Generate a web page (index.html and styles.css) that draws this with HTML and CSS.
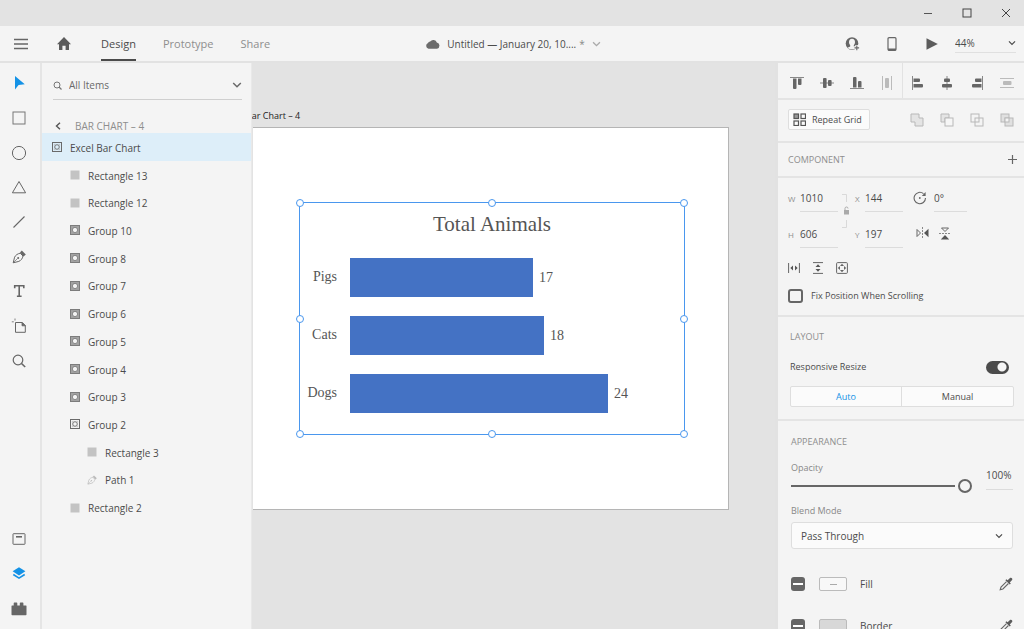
FILE: index.html
```html
<!DOCTYPE html>
<html lang="en">
<head>
<meta charset="utf-8">
<meta name="viewport" content="width=device-width, initial-scale=1">
<title>Untitled — January 20</title>
<link rel="stylesheet" href="styles.css">
</head>
<body>
<svg class="defs" aria-hidden="true">
  <symbol id="i-rect" viewBox="0 0 10 10"><rect x="0.5" y="0.5" width="9" height="9" fill="#c3c3c3"/></symbol>
  <symbol id="i-group" viewBox="0 0 10 10"><rect x="0.5" y="0.5" width="9" height="9" fill="none" stroke="#6a6a6a"/><circle cx="5" cy="5" r="2.3" fill="none" stroke="#666" stroke-width="0.9"/><path d="M2.3 3.500V2.300H3.500M6.500 2.300h1.200V3.500M7.700 6.500v1.200H6.500M3.500 7.700H2.300V6.500" fill="none" stroke="#aaa" stroke-width="0.6"/></symbol>
  <symbol id="i-group-dark" viewBox="0 0 10 10"><rect x="0.5" y="0.5" width="9" height="9" fill="#a2a2a2" stroke="#7c7c7c"/><circle cx="5" cy="5" r="2.6" fill="#f4f4f4" stroke="#6a6a6a" stroke-width="0.7"/></symbol>
  <symbol id="i-pen" viewBox="0 0 14 14"><path d="M1.200 12.800 2.600 7.200C3.700 4.900 5.600 3.800 8.200 3.200L11 6c-.6 2.600-1.800 4.400-4.200 5.400z" fill="none" stroke="currentColor"/><path d="M1.400 12.600l4-4" stroke="currentColor" stroke-width=".7"/><circle cx="6.200" cy="7.900" r="1" fill="currentColor"/><path d="M8 2.600 9.800.6l4 4-2.200 1.800z" fill="currentColor"/></symbol>
  <symbol id="i-chev" viewBox="0 0 10 6"><path d="M1.2 1 5 4.8 8.8 1" fill="none" stroke="currentColor" stroke-width="1.5"/></symbol>
  <symbol id="i-dropper" viewBox="0 0 14 14"><path d="M7.5 4.6 2 10.1 1.2 12.8l2.7-.8 5.5-5.5" fill="none" stroke="#666" stroke-width="1.1"/><path d="m6.4 3.2 1-1 1.2 1L11 .9c1.4-.9 3 .7 2.1 2.1l-2.3 2.4 1 1.2-1 1z" fill="#5c5c5c"/></symbol>
</svg>

<header class="titlebar">
  <button class="icon-btn" aria-label="Minimize"><svg width="10" height="10"><path d="M1 5.5h8" stroke="#555"/></svg></button>
  <button class="icon-btn" aria-label="Maximize"><svg width="10" height="10"><rect x="1" y="1" width="8" height="8" fill="none" stroke="#444"/></svg></button>
  <button class="icon-btn" aria-label="Close"><svg width="10" height="10"><path d="m1 1 8 8M9 1 1 9" stroke="#444"/></svg></button>
</header>

<div class="topbar">
  <div class="topbar-left">
    <button class="icon-btn menu" aria-label="Menu"><svg width="14" height="12"><path d="M0 1.500h14M0 6h14M0 10.500h14" stroke="#666" stroke-width="1.4"/></svg></button>
    <button class="icon-btn home" aria-label="Home"><svg width="14" height="13"><path d="M7 0 14 7.200h-2V13H8.600V8.800H5.400V13H2V7.200H0z" fill="#5c5c5c"/></svg></button>
    <nav class="modes">
      <a class="mode active" href="#design">Design</a>
      <a class="mode" href="#prototype">Prototype</a>
      <a class="mode" href="#share">Share</a>
    </nav>
  </div>
  <button class="document">
    <svg width="15" height="10"><path d="M3.500 9.700A3 3 0 0 1 3 4 2.300 2.300 0 0 1 5.200 2.500 3.700 3.700 0 0 1 11.800 3.600 3.100 3.100 0 0 1 12 9.700z" fill="#6c6c6c"/></svg>
    <span>Untitled — January 20, 10....</span><span class="dirty">*</span>
    <svg class="faint" width="9" height="6"><use href="#i-chev"/></svg>
  </button>
  <div class="topbar-right">
    <button class="icon-btn" aria-label="Invite"><svg width="15" height="14"><circle cx="7" cy="6.500" r="6.300" fill="#666"/><path d="M7 1.800c2 0 3 1.400 3 3.300 0 1.500-.6 2.500-1.200 3.200v1.200l2.700 1.300c-2.300 2-6.600 2-9 0l2.700-1.300V8.300C4.600 7.600 4 6.600 4 5.100c0-1.900 1-3.300 3-3.300z" fill="#f4f4f4"/><path d="M11.800 8v5.500M9 10.800h5.600" stroke="#f4f4f4" stroke-width="3"/><path d="M11.800 8.600v4.600M9.500 10.900h4.600" stroke="#666" stroke-width="1.100"/></svg></button>
    <button class="icon-btn" aria-label="Device preview"><svg width="10" height="14"><rect x="1" y=".7" width="8" height="12.600" rx="1" fill="none" stroke="#666" stroke-width="1.200"/><path d="M1 11.500h8v2H1z" fill="#666"/></svg></button>
    <button class="icon-btn" aria-label="Play"><svg width="12" height="12"><path d="M.5.200 11.800 6 .5 11.800z" fill="#5c5c5c"/></svg></button>
    <div class="select zoom">
      <select aria-label="Zoom"><option>44%</option></select>
      <svg width="8" height="6"><use href="#i-chev"/></svg>
    </div>
  </div>
</div>

<main class="workspace">
  <aside class="tools" aria-label="Tools">
    <div class="tool-list">
      <button class="icon-btn" aria-label="Select"><svg width="14" height="16"><path d="M3 1v13.500l3.600-4.600 6.200-.6z" fill="#1492e6"/></svg></button>
      <button class="icon-btn" aria-label="Rectangle"><svg width="14" height="14"><rect x="1" y="1" width="12" height="12" fill="none" stroke="#777"/></svg></button>
      <button class="icon-btn" aria-label="Ellipse"><svg width="16" height="16"><circle cx="8" cy="8" r="6.600" fill="none" stroke="#666"/></svg></button>
      <button class="icon-btn" aria-label="Polygon"><svg width="16" height="14"><path d="M8 1.500 14.600 12.800H1.400z" fill="none" stroke="#666"/></svg></button>
      <button class="icon-btn" aria-label="Line"><svg width="14" height="14"><path d="M1.500 12.500 12.500 1.500" stroke="#666" stroke-width="1.100"/></svg></button>
      <button class="icon-btn pen" aria-label="Pen"><svg width="14" height="14"><use href="#i-pen"/></svg></button>
      <button class="icon-btn" aria-label="Text"><svg width="14" height="14"><path d="M2.700 4.200V1.800h9.100v2.400M7.200 1.800v10.400M4.900 12.200h4.700" fill="none" stroke="#666" stroke-width="1.600"/></svg></button>
      <button class="icon-btn" aria-label="Artboard"><svg width="16" height="16"><path d="M4.500 4.500h6.800l3 3v6.800H4.500z" fill="none" stroke="#666"/><path d="M11 4.500v3.300h3.300zM.8 3.800h2M4 .5v2" fill="#666" stroke="#666" stroke-width=".8"/></svg></button>
      <button class="icon-btn" aria-label="Zoom tool"><svg width="14" height="14"><circle cx="6" cy="6" r="4.800" fill="none" stroke="#666" stroke-width="1.200"/><path d="m9.500 9.500 3.700 3.500" stroke="#666" stroke-width="1.600"/></svg></button>
    </div>
    <div class="tool-panels">
      <button class="icon-btn" aria-label="Assets"><svg width="14" height="12"><rect x="1" y=".7" width="12" height="10.600" rx=".5" fill="none" stroke="#666"/><path d="M4 3.800h6" stroke="#666" stroke-width="1.600"/></svg></button>
      <button class="icon-btn" aria-label="Layers"><svg width="14" height="13"><path d="M7 .2 13.400 4.300 7 8.400.6 4.300z" fill="#1492e6"/><path d="M1.300 7.500 7 11.100l5.700-3.600" fill="none" stroke="#1492e6" stroke-width="1.700"/></svg></button>
      <button class="icon-btn" aria-label="Plugins"><svg width="16" height="14"><path d="M1 3.500h1.700V1.200Q2.700.5 3.400.5h2.200q.7 0 .7.700v2.300h2.500V1.200q0-.7.7-.7h2.200q.7 0 .7.700v2.300H15q.5 0 .5.500v8.500q0 .8-.8.800H1.300q-.8 0-.8-.8V4q0-.5.5-.5z" fill="#666"/></svg></button>
    </div>
  </aside>

  <aside class="layers">
    <div class="filter">
      <svg width="9" height="9"><circle cx="4" cy="4" r="3" fill="none" stroke="#777"/><path d="m6 6 2.500 2.500" stroke="#777" stroke-width="1.200"/></svg>
      <div class="select">
        <select aria-label="Layer filter"><option>All Items</option></select>
        <svg width="10" height="6"><use href="#i-chev"/></svg>
      </div>
    </div>
    <button class="back"><svg width="6" height="8"><path d="M5 .8 1.500 4 5 7.200" fill="none" stroke="#555" stroke-width="1.400"/></svg><span>BAR CHART – 4</span></button>
    <ul class="layer-list">
      <li class="layer selected"><svg><use href="#i-group"/></svg>Excel Bar Chart</li>
      <li class="layer child"><svg><use href="#i-rect"/></svg>Rectangle 13</li>
      <li class="layer child"><svg><use href="#i-rect"/></svg>Rectangle 12</li>
      <li class="layer child"><svg><use href="#i-group-dark"/></svg>Group 10</li>
      <li class="layer child"><svg><use href="#i-group-dark"/></svg>Group 8</li>
      <li class="layer child"><svg><use href="#i-group-dark"/></svg>Group 7</li>
      <li class="layer child"><svg><use href="#i-group-dark"/></svg>Group 6</li>
      <li class="layer child"><svg><use href="#i-group-dark"/></svg>Group 5</li>
      <li class="layer child"><svg><use href="#i-group-dark"/></svg>Group 4</li>
      <li class="layer child"><svg><use href="#i-group-dark"/></svg>Group 3</li>
      <li class="layer child"><svg><use href="#i-group"/></svg>Group 2</li>
      <li class="layer grandchild"><svg><use href="#i-rect"/></svg>Rectangle 3</li>
      <li class="layer grandchild path"><svg><use href="#i-pen"/></svg>Path 1</li>
      <li class="layer child"><svg><use href="#i-rect"/></svg>Rectangle 2</li>
    </ul>
  </aside>

  <section class="canvas" aria-label="Canvas">
    <span class="artboard-name">Bar Chart – 4</span>
    <div class="artboard">
      <div class="selection">
        <h1 class="chart-title">Total Animals</h1>
        <div class="chart">
          <span class="category">Pigs</span><div class="series"><div class="bar" style="width:183px"></div><span>17</span></div>
          <span class="category">Cats</span><div class="series"><div class="bar" style="width:194px"></div><span>18</span></div>
          <span class="category">Dogs</span><div class="series"><div class="bar" style="width:258px"></div><span>24</span></div>
        </div>
        <i class="handle n w"></i><i class="handle n c"></i><i class="handle n e"></i>
        <i class="handle m w"></i><i class="handle m e"></i>
        <i class="handle s w"></i><i class="handle s c"></i><i class="handle s e"></i>
      </div>
    </div>
  </section>

  <aside class="inspector">
    <div class="align">
      <button class="icon-btn" aria-label="Align top"><svg width="14" height="14"><path d="M0 1.500h14" stroke="#888"/><path d="M3 2.500h3.500V12q0 1-1 1H4q-1 0-1-1zM8 2.500h3.500V8q0 1-1 1H9Q8 9 8 8z" fill="#666"/></svg></button>
      <button class="icon-btn" aria-label="Align middle"><svg width="14" height="14"><path d="M0 7h14" stroke="#888"/><rect x="3" y="2" width="3.600" height="10" rx="1" fill="#666"/><rect x="8" y="4" width="3.600" height="6" rx="1" fill="#666"/></svg></button>
      <button class="icon-btn" aria-label="Align bottom"><svg width="14" height="14"><path d="M0 12.500h14" stroke="#888"/><path d="M3 11.500V2q0-1 1-1h1.500q1 0 1 1v9.500zM8 11.500V6q0-1 1-1h1.500q1 0 1 1v5.500z" fill="#666"/></svg></button>
      <button class="icon-btn" aria-label="Distribute horizontally"><svg width="14" height="14"><path d="M2.500 0v14M11.500 0v14" stroke="#bbb"/><rect x="5" y="2" width="4" height="10" rx="1" fill="#bbb"/></svg></button>
      <button class="icon-btn divided" aria-label="Align left"><svg width="14" height="14"><path d="M1.500 0v14" stroke="#888"/><path d="M2.500 2.500H8q1 0 1 1V5q0 1-1 1H2.500zM2.500 8H11q1 0 1 1v1.500q0 1-1 1H2.500z" fill="#666"/></svg></button>
      <button class="icon-btn" aria-label="Align center"><svg width="14" height="14"><path d="M7 0v14" stroke="#888"/><rect x="4" y="2.500" width="6" height="3.500" rx="1" fill="#666"/><rect x="2" y="8" width="10" height="3.500" rx="1" fill="#666"/></svg></button>
      <button class="icon-btn" aria-label="Align right"><svg width="14" height="14"><path d="M12.500 0v14" stroke="#888"/><path d="M11.500 2.500H6q-1 0-1 1V5q0 1 1 1h5.500zM11.500 8H3Q2 8 2 9v1.500q0 1 1 1h8.500z" fill="#666"/></svg></button>
      <button class="icon-btn" aria-label="Distribute vertically"><svg width="14" height="14"><path d="M0 2.500h14M0 11.500h14" stroke="#bbb"/><rect x="3" y="5" width="8.500" height="4" rx="1" fill="#bbb"/></svg></button>
    </div>

    <div class="repeat">
      <button class="repeat-btn"><svg width="13" height="13"><g fill="none" stroke="#555" stroke-width="1.200"><rect x="1" y="1" width="4.500" height="4.500" fill="#999"/><rect x="8" y="1" width="4.500" height="4.500"/><rect x="1" y="8" width="4.500" height="4.500"/><rect x="8" y="8" width="4.500" height="4.500"/></g></svg>Repeat Grid</button>
      <div class="boolean">
        <button class="icon-btn" aria-label="Add"><svg width="14" height="14"><path d="M1 1h8v4h4v8H5V9H1z" fill="#e4e4e4" stroke="#b8b8b8"/></svg></button>
        <button class="icon-btn" aria-label="Subtract"><svg width="14" height="14"><path d="M1 1h8v4H5v4H1z" fill="#e4e4e4" stroke="#b8b8b8"/><rect x="5" y="5" width="8" height="8" fill="#f6f6f6" stroke="#b8b8b8"/></svg></button>
        <button class="icon-btn" aria-label="Intersect"><svg width="14" height="14" fill="none" stroke="#b8b8b8"><rect x="1" y="1" width="8" height="8"/><rect x="5" y="5" width="8" height="8"/></svg></button>
        <button class="icon-btn" aria-label="Exclude overlap"><svg width="14" height="14" fill="#e0e0e0" stroke="#b8b8b8"><rect x="1" y="1" width="8" height="8"/><rect x="5" y="5" width="8" height="8"/><rect x="5" y="5" width="4" height="4" fill="#f4f4f4"/></svg></button>
      </div>
    </div>

    <div class="component">
      <h2 class="heading">COMPONENT</h2>
      <button class="icon-btn" aria-label="Make component"><svg width="9" height="9"><path d="M4.500 0v9M0 4.500h9" stroke="#666" stroke-width="1.200"/></svg></button>
    </div>

    <div class="transform">
      <div class="geometry">
        <label for="w">W</label><input id="w" class="value" value="1010">
        <button class="icon-btn lock" aria-label="Lock aspect"><svg width="9" height="36"><path d="M1 1.500h4.500V9M1 34.500h4.500V27" fill="none" stroke="#d9d9d9"/><rect x="3" y="17" width="5" height="4.500" fill="#aaa"/><path d="M4 17v-1.500a1.500 1.500 0 0 1 3 0" fill="none" stroke="#aaa"/></svg></button>
        <label for="x">X</label><input id="x" class="value" value="144">
        <label for="r" class="rotate" aria-label="Rotation"><svg width="14" height="14"><path d="M12.500 7a5.700 5.700 0 1 1-2-4.300" fill="none" stroke="#666" stroke-width="1.100"/><path d="M12.600 1v4H8.800z" fill="#666"/><circle cx="6.800" cy="7" r=".9" fill="#666"/></svg></label><input id="r" class="value" value="0°">
        <label for="h">H</label><input id="h" class="value" value="606">
        <label for="y">Y</label><input id="y" class="value" value="197">
        <div class="flips">
          <button class="icon-btn" aria-label="Flip horizontally"><svg width="13" height="12"><path d="M1 2.500v7L4.500 6z" fill="none" stroke="#666"/><path d="M12.500 1.800v8.400L8 6z" fill="#555"/><path d="M6.500 0v12" stroke="#888" stroke-dasharray="2 1"/></svg></button>
          <button class="icon-btn" aria-label="Flip vertically"><svg width="12" height="13"><path d="M2.500 1h7L6 4.500z" fill="none" stroke="#666"/><path d="M1.800 12.500h8.400L6 8z" fill="#555"/><path d="M0 6.500h12" stroke="#888" stroke-dasharray="2 1"/></svg></button>
        </div>
      </div>
      <div class="sizing">
        <button class="icon-btn" aria-label="Fit width"><svg width="12" height="12"><path d="M.6 1v10M11.400 1v10" stroke="#666"/><path d="M5 3.500v5L2.300 6zM7 3.500v5L9.700 6z" fill="#555"/></svg></button>
        <button class="icon-btn" aria-label="Fit height"><svg width="12" height="12"><path d="M1 .6h10M1 11.400h10" stroke="#666"/><path d="M3.500 5h5L6 2.300zM3.500 7h5L6 9.700z" fill="#555"/></svg></button>
        <button class="icon-btn" aria-label="Fit both"><svg width="12" height="12"><rect x=".6" y=".6" width="10.800" height="10.800" rx="1" fill="none" stroke="#666"/><path d="M6 1.800 8 4H4zM6 10.200 4 8h4zM1.800 6 4 4v4zM10.200 6 8 8V4z" fill="#666"/></svg></button>
      </div>
      <label class="check"><input type="checkbox">Fix Position When Scrolling</label>
    </div>

    <div class="layout">
      <h2 class="heading">LAYOUT</h2>
      <label class="resize">Responsive Resize<input type="checkbox" role="switch" class="switch" checked></label>
      <div class="segments"><button class="on">Auto</button><button>Manual</button></div>
    </div>

    <div class="appearance">
      <h2 class="heading">APPEARANCE</h2>
      <div class="opacity">
        <div class="slider"><label for="opacity">Opacity</label><input id="opacity" type="range" value="100"></div>
        <input class="value" aria-label="Opacity value" value="100%">
      </div>
      <label class="caption" for="blend">Blend Mode</label>
      <div class="select blend">
        <select id="blend"><option>Pass Through</option></select>
        <svg width="8" height="6"><use href="#i-chev"/></svg>
      </div>
      <div class="paint"><input type="checkbox" id="fill" class="mixed"><button class="swatch none" aria-label="Fill color"></button><label for="fill">Fill</label><button class="icon-btn" aria-label="Pick fill"><svg width="14" height="14"><use href="#i-dropper"/></svg></button></div>
      <div class="paint"><input type="checkbox" id="border" class="mixed"><button class="swatch" aria-label="Border color"></button><label for="border">Border</label><button class="icon-btn" aria-label="Pick border"><svg width="14" height="14"><use href="#i-dropper"/></svg></button></div>
    </div>
  </aside>
</main>
</body>
</html>
```
FILE: styles.css
```css
* { box-sizing: border-box; }

body {
  margin: 0;
  height: 100vh;
  display: flex;
  flex-direction: column;
  overflow: hidden;
  background: #e3e3e3;
  color: #4b4b4b;
  font: 10px/14px "Open Sans", "Noto Sans", sans-serif;
}

button, input, select { font: inherit; color: inherit; margin: 0; }
button { border: 0; padding: 0; background: none; }
svg { display: block; flex: none; }
h1, h2, ul { margin: 0; padding: 0; font-weight: normal; }
.defs { width: 0; height: 0; position: absolute; }
.icon-btn { display: flex; align-items: center; justify-content: center; }

.select { display: grid; align-items: center; }
.select > * { grid-area: 1 / 1; }
.select select { appearance: none; border: 0; padding: 0; background: transparent; width: 100%; outline: 0; }
.select svg { justify-self: end; pointer-events: none; }

/* Window chrome */
.titlebar { flex: none; height: 26px; display: flex; justify-content: flex-end; gap: 29px; padding-right: 13px; }

.topbar {
  flex: none;
  height: 37px;
  display: grid;
  grid-template-columns: 1fr auto 1fr;
  background: #f4f4f4;
  border-bottom: 2px solid #e2e2e2;
}
.topbar-left { display: flex; padding-left: 14px; }
.home { margin: 0 30px 0 29px; }
.modes { display: flex; gap: 27px; }
.mode {
  display: flex;
  align-items: center;
  padding-top: 2px;
  color: #8e8e8e;
  font-size: 11px;
  text-decoration: none;
  border-bottom: 2px solid transparent;
}
.mode.active { color: #4b4b4b; border-color: #4b4b4b; }
.document { display: flex; align-items: center; gap: 7px; padding-left: 2px; }
.dirty { color: #888; margin-left: -4px; }
.faint { color: #aaa; }
.topbar-right { display: flex; justify-content: flex-end; padding-right: 8px; gap: 24px; }
.topbar-right .icon-btn { width: 16px; }
.zoom { width: 61px; height: 27px; margin-left: -9px; border-bottom: 1px solid #e0e0e0; padding-top: 8px; }

.workspace { flex: 1; min-height: 0; display: grid; grid-template-columns: 42px 210px 1fr 250px; }

/* Tools */
.tools {
  display: flex;
  flex-direction: column;
  justify-content: space-between;
  padding: 3px 2px 3px 0;
  background: #f4f4f4;
  border-right: 2px solid #e5e5e5;
}
.tool-list, .tool-panels { display: grid; grid-auto-rows: 1fr; }
.tool-list { height: 312px; }
.tool-panels { height: 104px; }
.pen { color: #666; }

/* Layers */
.layers { background: #f4f4f4; border-right: 1px solid #e9e9e9; }
.filter {
  display: flex;
  align-items: center;
  gap: 7px;
  height: 29px;
  margin: 8px 9px 0 11px;
  border-bottom: 1px solid #cfcfcf;
  color: #6a6a6a;
}
.filter .select { flex: 1; }
.back { display: flex; align-items: center; gap: 14px; height: 14px; margin: 19px 0 0 13px; color: #8e8e8e; }
.layer-list { display: grid; grid-auto-rows: 1fr; height: 388px; list-style: none; }
.layer { display: flex; align-items: center; gap: 8px; padding: 2px 0 0 10px; }
.layer svg { width: 10px; height: 10px; margin-bottom: 1px; }
.layer.child { padding-left: 28px; }
.layer.grandchild { padding-left: 45px; }
.layer.path svg { color: #bbb; }
.layer.selected { background: #ddeef9; }

/* Canvas */
.canvas { position: relative; overflow: hidden; background: #e3e3e3; }
.artboard-name { position: absolute; left: -6px; top: 46px; font-size: 9px; color: #222; white-space: nowrap; }
.artboard {
  position: absolute;
  left: 1px;
  top: 64px;
  width: 476px;
  height: 383px;
  background: #fff;
  border: 1px solid #b5b5b5;
  border-left: 0;
}
.selection {
  position: absolute;
  left: 46px;
  top: 74px;
  width: 386px;
  height: 233px;
  border: 1px solid #4a97ee;
  color: #555;
  font: 14px/18px "Liberation Serif", serif;
}
.chart-title { margin-top: 9px; font-size: 21px; line-height: 24px; text-align: center; }
.chart { display: grid; grid-template-columns: 37px 1fr; gap: 19px 13px; margin-top: 22px; }
.category { align-self: center; padding-bottom: 2px; text-align: right; }
.series { display: flex; align-items: center; gap: 6px; }
.bar { height: 39px; background: #4472c4; }
.handle {
  position: absolute;
  width: 8px;
  height: 8px;
  margin: -4px;
  border: 1px solid #4a97ee;
  border-radius: 50%;
  background: #fff;
}
.n { top: 0; }
.m { top: 50%; }
.s { top: 100%; }
.w { left: 0; }
.c { left: 50%; }
.e { left: 100%; }

/* Inspector */
.inspector { overflow: hidden; background: #f4f4f4; border-left: 3px solid #e2e2e2; margin-left: 1px; }
.inspector > div { border-bottom: 2px solid #e4e4e4; }
.align { display: grid; grid-template-columns: repeat(8, 1fr); height: 37px; padding: 0 2px 0 4px; }
.align .icon-btn { padding-top: 4px; }
.divided { border-left: 1px solid #e2e2e2; }
.repeat { display: flex; align-items: center; justify-content: space-between; height: 43px; padding: 0 2px 2px 10px; }
.repeat-btn {
  display: flex;
  align-items: center;
  gap: 6px;
  height: 21px;
  padding: 0 7px 0 4px;
  background: #fbfbfb;
  border: 1px solid #dedede;
  border-radius: 2px;
  font-size: 9px;
}
.boolean { display: grid; grid-template-columns: repeat(4, 30px); }
.component { display: flex; align-items: center; justify-content: space-between; height: 35px; padding: 0 7px 0 10px; }
.heading { color: #8e8e8e; font-size: 9px; line-height: 14px; }

.value {
  width: 100%;
  min-width: 0;
  height: 24px;
  padding: 0 0 4px;
  border: 0;
  border-bottom: 1px solid #dcdcdc;
  background: transparent;
  border-radius: 0;
  outline: 0;
}
.transform { padding: 10px 10px 12px; }
.geometry {
  display: grid;
  grid-template-columns: 12px 38px 17px 10px 38px 10px 21px 33px;
  grid-template-rows: 24px 24px;
  row-gap: 12px;
}
.geometry label { font-size: 8px; line-height: 22px; color: #8e8e8e; }
.lock { grid-row: 1 / 3; grid-column: 3; align-items: flex-start; padding: 5px 2px 0 0; }
.rotate { grid-column: 7; padding-top: 3px; }
.flips { grid-column: 7 / 9; display: flex; gap: 10px; padding: 0 0 6px 3px; }
.sizing { display: flex; gap: 12px; margin-top: 14px; }
.check { display: flex; align-items: center; gap: 8px; margin-top: 15px; font-size: 9px; }
.check input { appearance: none; width: 15px; height: 14px; border: 2px solid #666; border-radius: 3px; }

.layout { padding: 13px 10px 12px 12px; }
.resize { display: flex; align-items: center; justify-content: space-between; margin: 16px 5px 0 0; font-size: 9px; }
.switch {
  appearance: none;
  width: 23px;
  height: 13px;
  border-radius: 7px;
  background: radial-gradient(circle at 16px 6px, #f6f6f6 4px, #4b4b4b 5px);
}
.segments {
  display: grid;
  grid-template-columns: 1fr 1fr;
  height: 21px;
  margin-top: 12px;
  border: 1px solid #dedede;
  border-radius: 2px;
  background: #fbfbfb;
  font-size: 9px;
}
.segments .on { color: #1492e6; border-right: 1px solid #dedede; }

.appearance { padding: 14px 11px 0 13px; }
.opacity { display: flex; gap: 14px; align-items: flex-end; margin-top: 12px; }
.slider { flex: 1; }
.slider label, .caption { display: block; font-size: 9px; line-height: 14px; color: #888; }
.slider input { appearance: none; display: block; width: 100%; height: 14px; margin-top: 4px; background: transparent; }
.slider input::-webkit-slider-runnable-track {
  height: 14px;
  background: linear-gradient(to right, #666, #666) left center / calc(100% - 17px) 2px no-repeat;
}
.slider input::-webkit-slider-thumb {
  appearance: none;
  width: 14px;
  height: 14px;
  border: 2px solid #666;
  border-radius: 50%;
  background: #f4f4f4;
}
.opacity .value { width: 27px; margin-bottom: 3px; height: 27px; padding-bottom: 2px; }
.caption { margin-top: 11px; }
.blend { height: 27px; margin-top: 4px; padding: 0 9px; background: #fbfbfb; border: 1px solid #dedede; border-radius: 3px; }
.paint { display: flex; align-items: center; height: 14px; margin-top: 28px; }
.paint label { flex: 1; margin-left: 13px; }
.mixed {
  appearance: none;
  width: 14px;
  height: 14px;
  border-radius: 3px;
  background: linear-gradient(#fff, #fff) center / 10px 2px no-repeat #666;
}
.swatch { width: 28px; height: 14px; margin-left: 14px; border: 1px solid #bbb; border-radius: 2px; background: #d8d8d8; }
.swatch.none { background: linear-gradient(#aaa, #aaa) center / 7px 1px no-repeat #f8f8f8; }
```
